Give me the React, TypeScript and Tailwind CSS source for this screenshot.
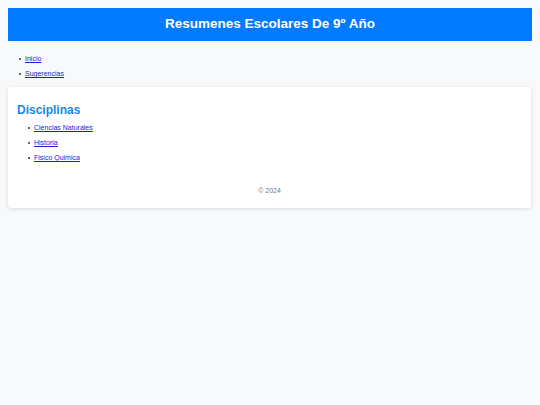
function Item({ label }: { label: string }) {
  return (
    <li className="flex items-center gap-[4px]">
      <span className="h-[2px] w-[2px] rounded-full bg-[#333]" />
      <a href="#" className="text-[#1a1ae6] underline">{label}</a>
    </li>
  );
}

export default function App() {
  return (
    <div className="min-h-[405px] bg-[#f8f9fa] p-2" style={{ fontFamily: '"Liberation Sans", Arial, sans-serif' }}>
      <header className="flex h-[33px] items-center justify-center bg-[#007bff]">
        <h1 className="text-[13.5px] font-bold text-white">Resumenes Escolares De 9º Año</h1>
      </header>
      <nav className="pt-[14px] pb-[9px]">
        <ul className="ml-[11px] flex flex-col gap-[7px] text-[7px] leading-[8px]">
          <Item label="Inicio" />
          <Item label="Sugerencias" />
        </ul>
      </nav>
      <main className="w-[523px] rounded-[3px] bg-white px-[9px] pt-[16px] pb-[11px] shadow-[0_1px_4px_rgba(0,0,0,0.12)]">
        <h2 className="text-[12px] font-bold leading-[14px] text-[#1b86e0]">Disciplinas</h2>
        <ul className="mt-[7px] ml-[11px] flex flex-col gap-[7px] text-[7px] leading-[8px]">
          <Item label="Ciencias Naturales" />
          <Item label="Historia" />
          <Item label="Fisico Quimica" />
        </ul>
        <footer className="mt-[24px] text-center text-[7px] text-[#777]">© 2024</footer>
      </main>
    </div>
  );
}
